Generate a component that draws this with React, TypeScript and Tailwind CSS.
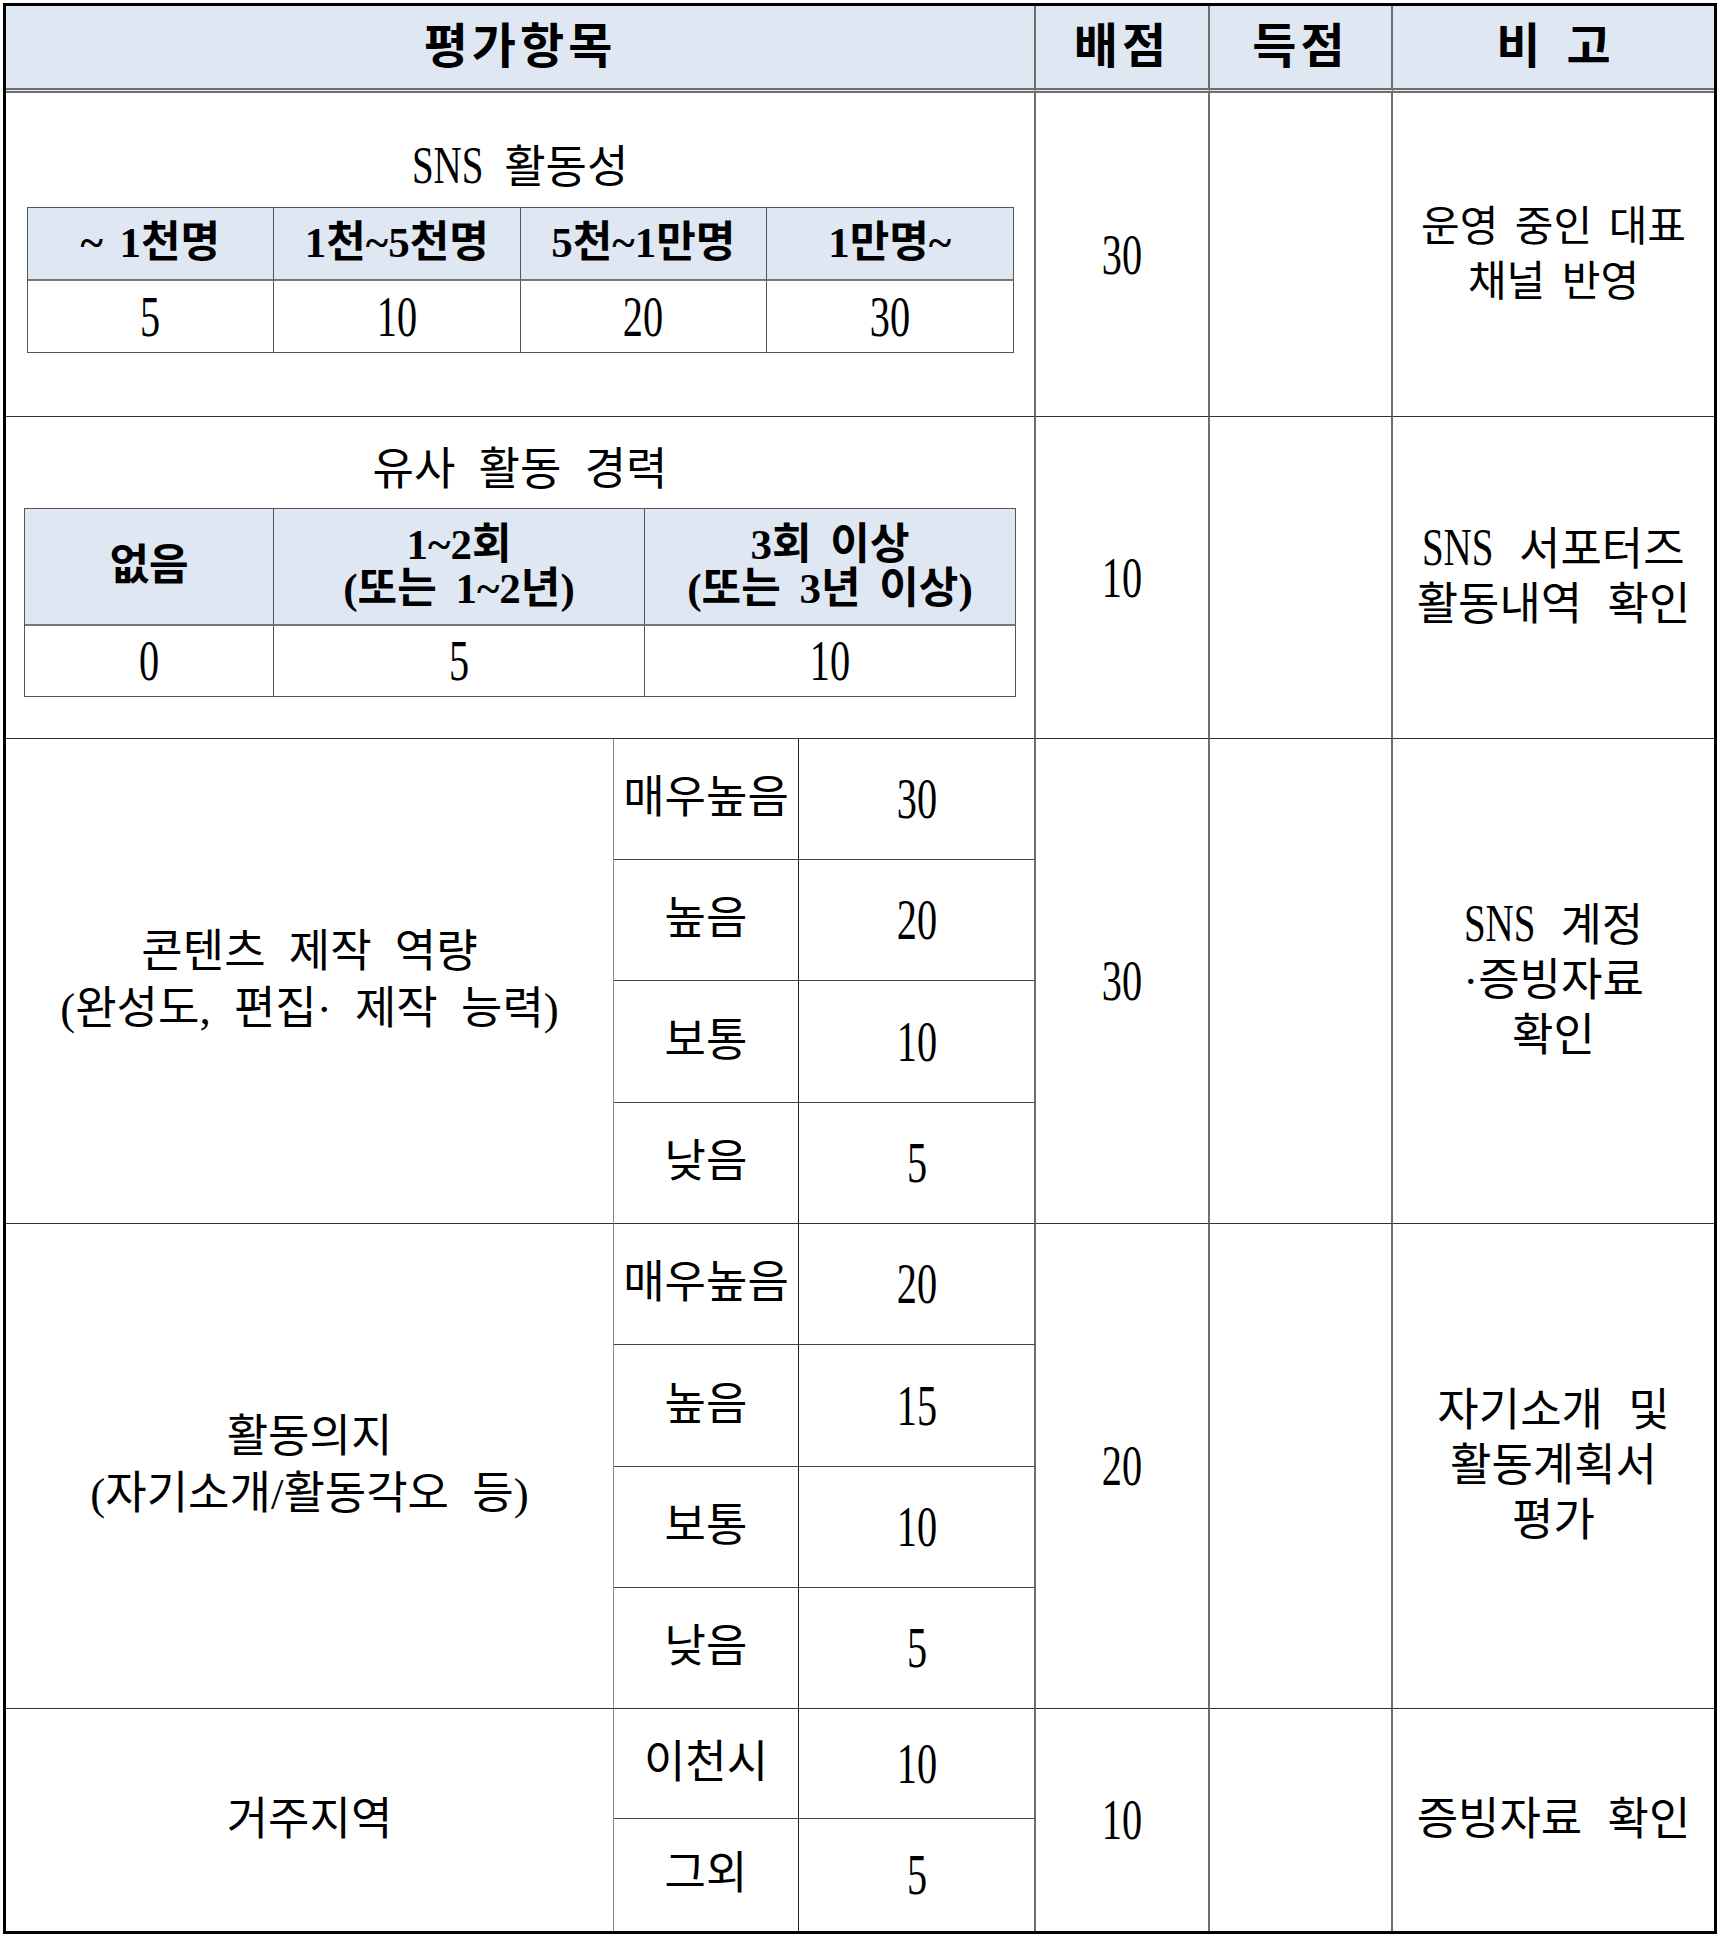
import { Fragment } from "react";

type Group = {
  title: string[];
  rows: [string, string][];
  score: string;
  note: string[];
  last?: boolean;
};

const groups: Group[] = [
  {
    title: ["콘텐츠 제작 역량", "(완성도, 편집· 제작 능력)"],
    rows: [
      ["매우높음", "30"],
      ["높음", "20"],
      ["보통", "10"],
      ["낮음", "5"],
    ],
    score: "30",
    note: ["SNS 계정", "·증빙자료", "확인"],
  },
  {
    title: ["활동의지", "(자기소개/활동각오 등)"],
    rows: [
      ["매우높음", "20"],
      ["높음", "15"],
      ["보통", "10"],
      ["낮음", "5"],
    ],
    score: "20",
    note: ["자기소개 및", "활동계획서", "평가"],
  },
  {
    title: ["거주지역"],
    rows: [
      ["이천시", "10"],
      ["그외", "5"],
    ],
    score: "10",
    note: ["증빙자료 확인"],
    last: true,
  },
];

function Num({ v }: { v: string }) {
  return <span className="inline-block scale-x-[0.72] text-[56px] leading-none">{v}</span>;
}

// condensed "SNS", as tall as the hangul next to it
function Sns() {
  return <span className="-mx-3 inline-block scale-x-75 text-[52px] leading-none">SNS</span>;
}

function Line({ text }: { text: string }) {
  if (text.startsWith("SNS ")) {
    return (
      <div className="whitespace-nowrap">
        <Sns /> {text.slice(4)}
      </div>
    );
  }
  return <div className="whitespace-nowrap">{text}</div>;
}

function Lines({ lines }: { lines: string[] }) {
  return (
    <div className="text-center leading-[55px]">
      {lines.map((l) => (
        <Line key={l} text={l} />
      ))}
    </div>
  );
}

function GroupRows({ g }: { g: Group }) {
  const span = g.rows.length === 4 ? "row-span-4" : "row-span-2";
  const rowLine = g.last ? "border-b-0" : "border-b border-b-[#333]";
  return (
    <>
      <div className={`${span} ${rowLine} flex items-center justify-center border-r border-r-[#8a8a8a]`}>
        <div className="text-center leading-[57px]">
          {g.title.map((t) => (
            <div key={t} className="whitespace-nowrap">
              {t}
            </div>
          ))}
        </div>
      </div>
      {g.rows.map(([label, pts], i) => {
        const isLast = i === g.rows.length - 1;
        const sub = isLast ? rowLine : "border-b border-b-[#444]";
        return (
          <Fragment key={label + pts}>
            <div className={`${sub} flex items-center justify-center border-r border-r-[#222]`}>{label}</div>
            <div className={`${sub} flex items-center justify-center border-r-2 border-r-[#6e6e6e]`}>
              <Num v={pts} />
            </div>
            {i === 0 && (
              <>
                <div className={`${span} ${rowLine} flex items-center justify-center border-r-2 border-r-[#6e6e6e]`}>
                  <Num v={g.score} />
                </div>
                <div className={`${span} ${rowLine} border-r-2 border-r-[#6e6e6e]`} />
                <div className={`${span} ${rowLine} flex items-center justify-center [word-spacing:14px]`}>
                  <Lines lines={g.note} />
                </div>
              </>
            )}
          </Fragment>
        );
      })}
    </>
  );
}

export default function App() {
  const snsHead = ["~ 1천명", "1천~5천명", "5천~1만명", "1만명~"];
  const snsVals = ["5", "10", "20", "30"];

  return (
    <div className="min-h-screen bg-white p-[3px] font-['Liberation_Serif','Noto_Sans_CJK_KR',serif] text-[45px] text-black [word-spacing:12px]">
      <div className="grid w-[1714px] grid-cols-[608px_185px_237px_174px_183px_321px] grid-rows-[87px_324px_322px_121px_121px_122px_121px_121px_122px_121px_121px_110px_112px] border-[3px] border-black">
        {/* header */}
        <div className="col-span-3 flex items-center justify-center border-b-[5px] border-r-2 border-double border-b-[#6f6f6f] border-r-[#6e6e6e] bg-[#dfe7f2] text-[48px] font-bold tracking-[4px]">
          평가항목
        </div>
        <div className="flex items-center justify-center border-b-[5px] border-r-2 border-double border-b-[#6f6f6f] border-r-[#6e6e6e] bg-[#dfe7f2] text-[48px] font-bold tracking-[4px]">
          배점
        </div>
        <div className="flex items-center justify-center border-b-[5px] border-r-2 border-double border-b-[#6f6f6f] border-r-[#6e6e6e] bg-[#dfe7f2] text-[48px] font-bold tracking-[4px]">
          득점
        </div>
        <div className="flex items-center justify-center border-b-[5px] border-double border-b-[#6f6f6f] bg-[#dfe7f2] text-[48px] font-bold [word-spacing:14px]">
          비 고
        </div>

        {/* SNS 활동성 */}
        <div className="col-span-3 flex flex-col items-center border-b border-r-2 border-b-[#333] border-r-[#6e6e6e] pt-[47px]">
          <div className="leading-[56px] [word-spacing:10px]">
            <Sns /> 활동성
          </div>
          <div className="mt-[11px] grid w-[987px] grid-cols-4 grid-rows-[73px_72px] border-l border-t border-[#555]">
            {snsHead.map((h) => (
              <div
                key={h}
                className="flex items-center justify-center border-b-2 border-r border-b-[#777] border-r-[#555] bg-[#dfe7f2] text-[43px] font-bold whitespace-nowrap [word-spacing:6px]"
              >
                {h}
              </div>
            ))}
            {snsVals.map((v) => (
              <div key={v} className="flex items-center justify-center border-b border-r border-[#555]">
                <Num v={v} />
              </div>
            ))}
          </div>
        </div>
        <div className="flex items-center justify-center border-b border-r-2 border-b-[#333] border-r-[#6e6e6e]">
          <Num v="30" />
        </div>
        <div className="border-b border-r-2 border-b-[#333] border-r-[#6e6e6e]" />
        <div className="flex items-center justify-center border-b border-b-[#333] text-[42px] [word-spacing:6px]">
          <Lines lines={["운영 중인 대표", "채널 반영"]} />
        </div>

        {/* 유사 활동 경력 */}
        <div className="col-span-3 flex flex-col items-center border-b border-r-2 border-b-[#333] border-r-[#6e6e6e] pt-[25px]">
          <div className="leading-[56px]">유사 활동 경력</div>
          <div className="mt-[10px] grid w-[992px] grid-cols-[249px_371px_371px] grid-rows-[117px_71px] border-l border-t border-[#555]">
            <div className="flex items-center justify-center border-b-2 border-r border-b-[#777] border-r-[#555] bg-[#dfe7f2] text-[43px] font-bold">
              없음
            </div>
            <div className="flex flex-col items-center justify-center border-b-2 border-r border-b-[#777] border-r-[#555] bg-[#dfe7f2] text-[43px] font-bold leading-[44px] [word-spacing:8px]">
              <div>1~2회</div>
              <div>(또는 1~2년)</div>
            </div>
            <div className="flex flex-col items-center justify-center border-b-2 border-r border-b-[#777] border-r-[#555] bg-[#dfe7f2] text-[43px] font-bold leading-[44px] [word-spacing:8px]">
              <div>3회 이상</div>
              <div>(또는 3년 이상)</div>
            </div>
            {["0", "5", "10"].map((v) => (
              <div key={v} className="flex items-center justify-center border-b border-r border-[#555]">
                <Num v={v} />
              </div>
            ))}
          </div>
        </div>
        <div className="flex items-center justify-center border-b border-r-2 border-b-[#333] border-r-[#6e6e6e]">
          <Num v="10" />
        </div>
        <div className="border-b border-r-2 border-b-[#333] border-r-[#6e6e6e]" />
        <div className="flex items-center justify-center border-b border-b-[#333] [word-spacing:14px]">
          <Lines lines={["SNS 서포터즈", "활동내역 확인"]} />
        </div>

        {groups.map((g) => (
          <GroupRows key={g.title[0]} g={g} />
        ))}
      </div>
    </div>
  );
}
